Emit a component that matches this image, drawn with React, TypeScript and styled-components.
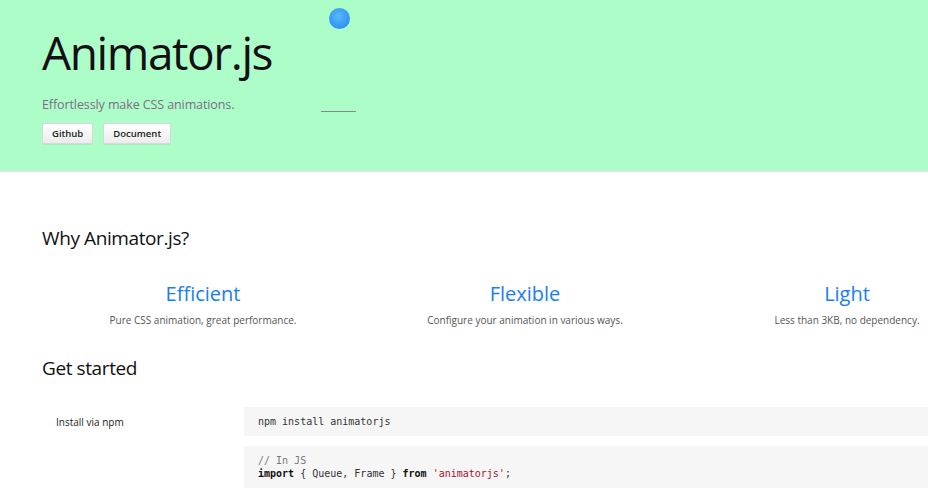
import React from 'react';
import styled, { createGlobalStyle } from 'styled-components';

const Global = createGlobalStyle`
  html, body {
    margin: 0;
    padding: 0;
    background: #fff;
    overflow-x: hidden;
  }
  body {
    font-family: "Open Sans", "Liberation Sans", sans-serif;
    color: #111;
  }
`

const Header = styled.header`
  position: relative;
  height: 172px;
  box-sizing: border-box;
  background: #adfdc8;
  border-bottom: 1px solid #e2e6e3;
  padding: 22px 0 0 42px;
`

const Title = styled.h1`
  margin: 0;
  font-size: 46px;
  font-weight: 400;
  line-height: 60px;
  color: #141014;
  letter-spacing: -1.4px;
`

const Tagline = styled.p`
  margin: 14px 0 0;
  font-size: 12.5px;
  line-height: 18px;
  color: #7c6d8a;
  letter-spacing: -0.1px;
`

const Buttons = styled.div`
  display: flex;
  gap: 10px;
  margin-top: 9px;
`

const Btn = styled.button`
  height: 21px;
  padding: 0 9px;
  font-family: "Open Sans", "Liberation Sans", sans-serif;
  font-size: 9.5px;
  font-weight: 600;
  color: #222;
  background: linear-gradient(#ffffff, #ececec);
  border: 1px solid #d8d8d8;
  border-radius: 2px;
  box-shadow: 0 1px 1px rgba(0, 0, 0, 0.06);
`

const Ball = styled.div`
  position: absolute;
  left: 329px;
  top: 8px;
  width: 21px;
  height: 21px;
  border-radius: 50%;
  background: radial-gradient(circle at 45% 40%, #5ab8ff, #2f93f2 70%, #2b88e6);
`

const Track = styled.div`
  position: absolute;
  left: 321px;
  top: 111px;
  width: 35px;
  height: 1px;
  background: #8a8a8a;
`

const Main = styled.main`
  width: 966px;
  padding: 0 0 0 42px;
`

const H2 = styled.h2`
  margin: 0;
  font-size: 19px;
  font-weight: 400;
  line-height: 26px;
  color: #111;
  letter-spacing: -0.4px;
`

const WhyTitle = styled(H2)`
  padding-top: 53px;
`

const Features = styled.div`
  display: grid;
  grid-template-columns: repeat(3, 1fr);
  margin-top: 30px;
  text-align: center;
`

const Feature = styled.div`
  display: flex;
  flex-direction: column;
  align-items: center;
`

const FeatureName = styled.div`
  font-size: 20px;
  line-height: 26px;
  color: #1a7df6;
`

const FeatureText = styled.div`
  margin-top: 6px;
  font-size: 10px;
  line-height: 14px;
  color: #555;
`

const StartTitle = styled(H2)`
  margin-top: 28px;
`

const Rows = styled.div`
  display: flex;
  flex-direction: column;
  gap: 10px;
  margin-top: 26px;
`

const Row = styled.div`
  display: grid;
  grid-template-columns: 202px 1fr;
  align-items: center;
`

const Label = styled.div`
  padding-left: 14px;
  font-size: 10px;
  color: #222;
`

const Code = styled.pre`
  margin: 0;
  padding: 8px 14px;
  background: #f6f6f6;
  font-family: "DejaVu Sans Mono", "Liberation Mono", monospace;
  font-size: 10px;
  line-height: 13px;
  color: #333;
`

const Kw = styled.b`
  color: #111;
`

const Str = styled.span`
  color: #a3142d;
`

const Comment = styled.span`
  color: #777;
`

const features = [
  { name: 'Efficient', text: 'Pure CSS animation, great performance.' },
  { name: 'Flexible', text: 'Configure your animation in various ways.' },
  { name: 'Light', text: 'Less than 3KB, no dependency.' },
]

export default function App() {
  return (
    <>
      <Global />
      <Header>
        <Title>Animator.js</Title>
        <Tagline>Effortlessly make CSS animations.</Tagline>
        <Buttons>
          <Btn>Github</Btn>
          <Btn>Document</Btn>
        </Buttons>
        <Ball />
        <Track />
      </Header>
      <Main>
        <WhyTitle>Why Animator.js?</WhyTitle>
        <Features>
          {features.map(f => (
            <Feature key={f.name}>
              <FeatureName>{f.name}</FeatureName>
              <FeatureText>{f.text}</FeatureText>
            </Feature>
          ))}
        </Features>
        <StartTitle>Get started</StartTitle>
        <Rows>
          <Row>
            <Label>Install via npm</Label>
            <Code>npm install animatorjs</Code>
          </Row>
          <Row>
            <span />
            <Code>
              <Comment>// In JS</Comment>{'\n'}
              <Kw>import</Kw> {'{ Queue, Frame }'} <Kw>from</Kw> <Str>'animatorjs'</Str>;
            </Code>
          </Row>
        </Rows>
      </Main>
    </>
  )
}
